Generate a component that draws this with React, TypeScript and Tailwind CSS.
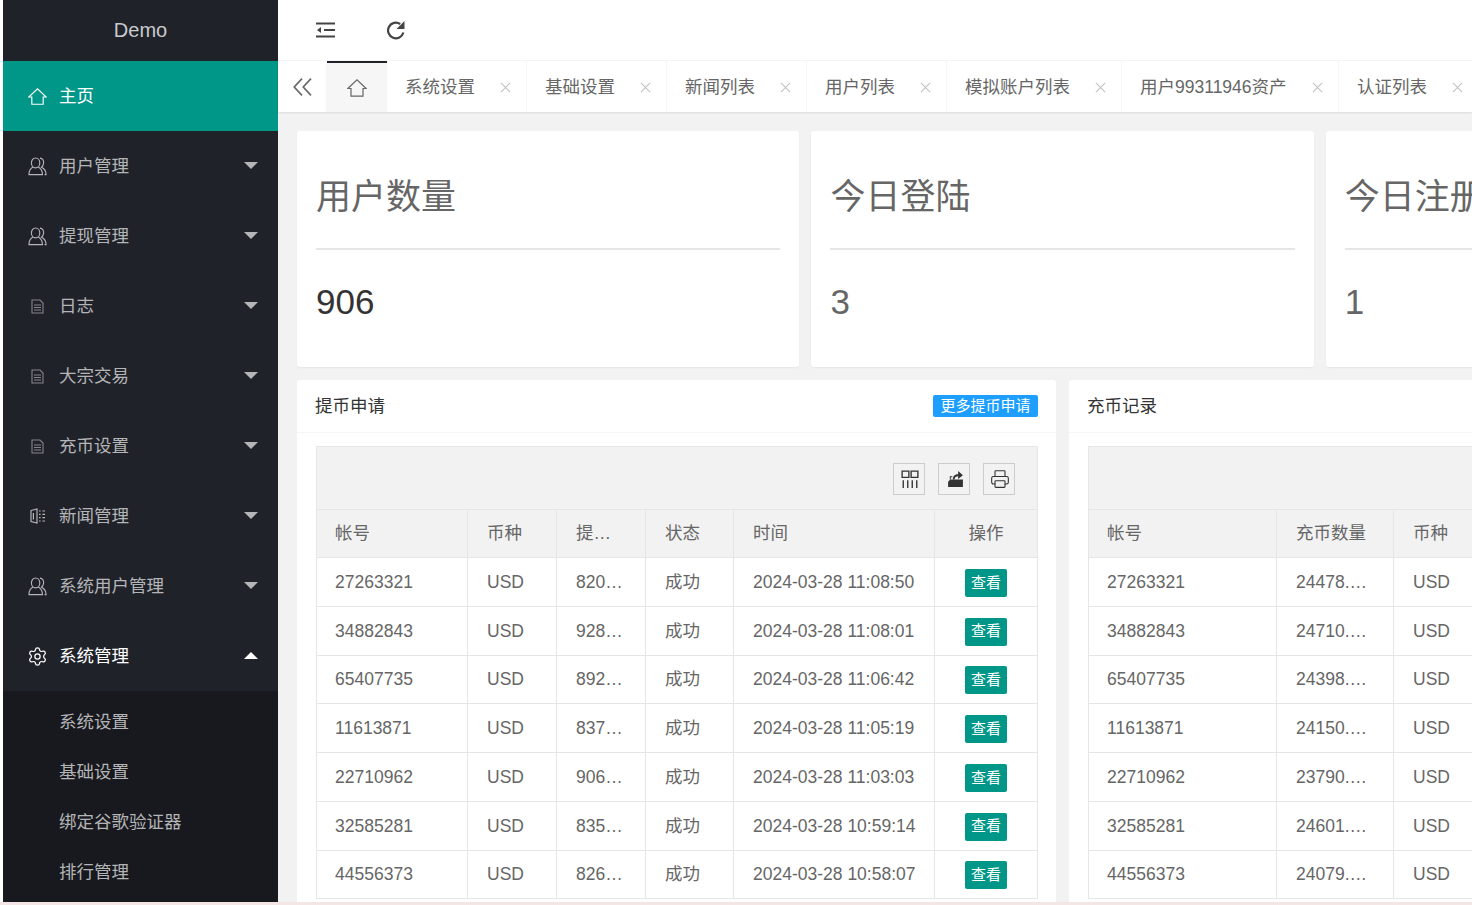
import { Settings, Printer } from 'lucide-react';

const menuItems = [
  { label: '用户管理', icon: 'user' },
  { label: '提现管理', icon: 'user' },
  { label: '日志', icon: 'file' },
  { label: '大宗交易', icon: 'file' },
  { label: '充币设置', icon: 'file' },
  { label: '新闻管理', icon: 'news' },
  { label: '系统用户管理', icon: 'user' },
];

const subItems = ['系统设置', '基础设置', '绑定谷歌验证器', '排行管理'];

const tabs = [
  { label: '系统设置', width: 'w-[140px]' },
  { label: '基础设置', width: 'w-[140px]' },
  { label: '新闻列表', width: 'w-[140px]' },
  { label: '用户列表', width: 'w-[140px]' },
  { label: '模拟账户列表', width: 'w-[175px]' },
  { label: '用户99311946资产', width: 'w-[217px]' },
  { label: '认证列表', width: 'w-[140px]' },
];

const stats = [
  { title: '用户数量', value: '906', color: 'text-[#333]' },
  { title: '今日登陆', value: '3', color: 'text-[#666]' },
  { title: '今日注册', value: '1', color: 'text-[#666]' },
];

const withdrawals = [
  ['27263321', '820…', '2024-03-28 11:08:50'],
  ['34882843', '928…', '2024-03-28 11:08:01'],
  ['65407735', '892…', '2024-03-28 11:06:42'],
  ['11613871', '837…', '2024-03-28 11:05:19'],
  ['22710962', '906…', '2024-03-28 11:03:03'],
  ['32585281', '835…', '2024-03-28 10:59:14'],
  ['44556373', '826…', '2024-03-28 10:58:07'],
];

const deposits = [
  ['27263321', '24478.…'],
  ['34882843', '24710.…'],
  ['65407735', '24398.…'],
  ['11613871', '24150.…'],
  ['22710962', '23790.…'],
  ['32585281', '24601.…'],
  ['44556373', '24079.…'],
];

function HomeIcon({ className }: { className: string }) {
  return (
    <svg viewBox="0 0 20 18" className={className} fill="none" stroke="currentColor" strokeWidth="1.2">
      <path d="M0.8 9.5 L10 0.9 L19.2 9.5 H16 V17.2 H4 V9.5 Z" />
    </svg>
  );
}

function UserIcon() {
  return (
    <svg viewBox="0 0 20 20" className="h-[19px] w-[19px]" fill="none" stroke="currentColor" strokeWidth="1.2">
      <ellipse cx="8" cy="6.2" rx="4.4" ry="5.2" />
      <path d="M5.2 10.6 C2.8 12 1 14.4 1 18.6 H15.2 C15.2 14.4 13.4 12 10.8 10.6" />
      <path d="M12.6 1.2 C15.4 1.4 16.8 3.6 16.4 6.6 C16.2 8.6 15.4 9.8 14.2 10.8 C16.8 12 19 14.4 19 18.6 H17.4" />
    </svg>
  );
}

function FileIcon() {
  return (
    <svg viewBox="0 0 13 15" className="h-[15px] w-[13px] text-[#85868a]" fill="none" stroke="currentColor" strokeWidth="1.1">
      <path d="M1 1 H9 L12 4 V14 H1 Z" />
      <path d="M3 6h7M3 8.5h7M3 11h7" />
    </svg>
  );
}

function NewsIcon() {
  return (
    <svg viewBox="0 0 16 16" className="h-[16px] w-[16px]" fill="none" stroke="currentColor" strokeWidth="1.2">
      <path d="M1 2.5 L7 1 V15 L1 13.5 Z" />
      <path d="M3.4 5v6.5" />
      <path d="M9 3h1.6M12.4 3H15M9 6.3h1.6M12.4 6.3H15M9 9.6h1.6M12.4 9.6H15M9 13h1.6M12.4 13H15" />
    </svg>
  );
}

function MenuIcon({ type }: { type: string }) {
  if (type === 'user') return <UserIcon />;
  if (type === 'file') return <FileIcon />;
  return <NewsIcon />;
}

function Sidebar() {
  return (
    <aside className="ml-[3px] flex w-[275px] shrink-0 flex-col bg-[#20222a]">
      <div className="flex h-[61px] items-center justify-center pb-[2px] text-[20px] text-[#c9cacc]">Demo</div>
      <div className="flex h-[70px] items-center bg-[#009688] pl-[25px] text-white">
        <span className="flex w-[19px] justify-center">
          <HomeIcon className="h-[17px] w-[19px]" />
        </span>
        <span className="ml-[12px]">主页</span>
      </div>
      {menuItems.map((item) => (
        <div key={item.label} className="flex h-[70px] items-center pl-[25px] text-[#b4b5b7]">
          <span className="flex w-[19px] justify-center">
            <MenuIcon type={item.icon} />
          </span>
          <span className="ml-[12px] flex-1">{item.label}</span>
          <span className="mb-[2px] mr-[20px] h-0 w-0 border-x-[7.5px] border-t-[7.5px] border-x-transparent border-t-[#b4b5b7]" />
        </div>
      ))}
      <div className="flex h-[70px] items-center pl-[25px] text-white">
        <span className="flex w-[19px] justify-center">
          <Settings className="h-[21px] w-[21px] shrink-0" strokeWidth={1.4} />
        </span>
        <span className="ml-[12px] flex-1">系统管理</span>
        <span className="mb-[2px] mr-[20px] h-0 w-0 border-x-[7.5px] border-b-[7.5px] border-x-transparent border-b-white" />
      </div>
      <div className="flex-1 bg-[#18191e] pt-[6px]">
        {subItems.map((label) => (
          <div key={label} className="flex h-[50px] items-center pl-[56px] text-[#b4b5b7]">
            {label}
          </div>
        ))}
      </div>
    </aside>
  );
}

function TopBar() {
  return (
    <div className="flex h-[61px] shrink-0 items-center border-b border-[#f6f6f6] bg-white pl-[38px] text-[#444]">
      <svg viewBox="0 0 20 16" className="h-[16px] w-[20px]" fill="none" stroke="currentColor" strokeWidth="2">
        <path d="M0 1.5h19M8 8h11M0 14.5h19" />
        <path d="M1 8l4-3v6z" fill="currentColor" stroke="none" />
      </svg>
      <svg viewBox="0 0 20 20" className="ml-[50px] h-[20px] w-[20px]" fill="none" stroke="currentColor" strokeWidth="2.2">
        <path d="M17.4 12.5 A7.8 7.8 0 1 1 14.2 4" />
        <path d="M18.5 1 V9 H10.5 Z" fill="currentColor" stroke="none" />
      </svg>
    </div>
  );
}

function TabBar() {
  return (
    <div className="flex h-[51px] shrink-0 bg-white text-[#666] shadow-[0_1px_2px_rgba(0,0,0,0.1)]">
      <div className="flex w-[49px] shrink-0 items-center justify-center border-r border-[#f6f6f6] pt-[1px]">
        <svg viewBox="0 0 19 18" className="h-[18px] w-[19px]" fill="none" stroke="currentColor" strokeWidth="1.6">
          <path d="M9 0.6 L1.2 9 L9 17.4M18 0.6 L10.2 9 L18 17.4" />
        </svg>
      </div>
      <div className="flex w-[60px] shrink-0 items-center justify-center border-t-2 border-[#20222a] bg-[#f6f6f6]">
        <HomeIcon className="h-[18px] w-[20px]" />
      </div>
      {tabs.map((tab) => (
        <div key={tab.label} className={`flex shrink-0 items-center justify-between border-r border-[#f6f6f6] pl-[18px] pr-[15px] pt-[2px] ${tab.width}`}>
          <span className="whitespace-nowrap">{tab.label}</span>
          <svg viewBox="0 0 12 12" className="h-[11px] w-[11px] shrink-0 text-[#c2c2c2]" fill="none" stroke="currentColor" strokeWidth="1.2">
            <path d="M1 1L11 11M11 1L1 11" />
          </svg>
        </div>
      ))}
    </div>
  );
}

function StatCard({ title, value, color }: { title: string; value: string; color: string }) {
  return (
    <div className="h-[236px] w-[502.4px] shrink-0 rounded-[3px] bg-white px-[19px] shadow-[0_1px_2px_rgba(0,0,0,0.05)]">
      <div className="flex h-[119px] items-center overflow-hidden whitespace-nowrap border-b-2 border-[#e6e6e6] pt-[15px] text-[35px] text-[#666]">
        {title}
      </div>
      <div className={`flex h-[104px] items-center text-[35px] ${color}`}>{value}</div>
    </div>
  );
}

const firstHead = 'flex h-[47px] items-center border-r border-[#e6e6e6] pl-[18px]';
const headCell = 'flex h-[47px] items-center border-r border-[#e6e6e6] px-[19px]';
const firstCell = 'flex h-full items-center border-r border-[#e6e6e6] pl-[18px] whitespace-nowrap';
const bodyCell = 'flex h-full items-center border-r border-[#e6e6e6] px-[19px] whitespace-nowrap';
const toolButton = 'flex h-[32px] w-[32px] items-center justify-center border border-[#ccc] text-[#333]';

function WithdrawTable() {
  return (
    <div className="grid w-[722px] grid-cols-[151px_89px_89px_88px_201px_102px] border border-b-0 border-[#e6e6e6] text-[#666]">
      <div className="col-span-6 flex h-[63px] items-center justify-end gap-[13px] border-b border-[#e6e6e6] bg-[#f2f2f2] pr-[22px] pt-[1px]">
        <button className={toolButton}>
          <svg viewBox="0 0 16 16" className="ml-[2px] h-[18px] w-[18px]" fill="none" stroke="currentColor" strokeWidth="1.2">
            <path d="M1 1h6v5.5H1zM9 1h6v5.5H9zM2 9v7M6 9v7M10 9v7M14 9v7" />
          </svg>
        </button>
        <button className={toolButton}>
          <svg viewBox="0 0 16 17" className="ml-[2px] h-[18px] w-[17px]" fill="currentColor">
            <path d="M1 11 L3 9 H15 V16 H1 Z" />
            <path d="M5.5 9 C5.5 5.5 7.5 4 10.5 4 V1 L15 5 L10.5 8.5 V6 C8.5 6 7.5 7 7 9 Z" />
            <path d="M2.6 9 V6 H5 V6.9 H3.5 V9 Z" />
          </svg>
        </button>
        <button className={toolButton}>
          <Printer className="ml-[1px] h-[20px] w-[20px]" strokeWidth={1.3} />
        </button>
      </div>
      <div className="col-span-6 grid grid-cols-subgrid border-b border-[#e6e6e6] bg-[#f2f2f2]">
        <div className={firstHead}>帐号</div>
        <div className={headCell}>币种</div>
        <div className={headCell}>提…</div>
        <div className={headCell}>状态</div>
        <div className={headCell}>时间</div>
        <div className="flex h-[47px] items-center justify-center">操作</div>
      </div>
      {withdrawals.map(([account, amount, time]) => (
        <div key={account} className="col-span-6 grid h-[48.75px] grid-cols-subgrid border-b border-[#e6e6e6]">
          <div className={firstCell}>{account}</div>
          <div className={bodyCell}>USD</div>
          <div className={bodyCell}>{amount}</div>
          <div className={bodyCell}>成功</div>
          <div className={bodyCell}>{time}</div>
          <div className="flex items-center justify-center pt-[2px]">
            <span className="flex h-[28px] w-[42px] items-center justify-center rounded-[2px] bg-[#009688] text-[15px] text-white">查看</span>
          </div>
        </div>
      ))}
    </div>
  );
}

function DepositTable() {
  return (
    <div className="grid w-[440px] grid-cols-[188px_117px_135px] border border-b-0 border-r-0 border-[#e6e6e6] text-[#666]">
      <div className="col-span-3 h-[63px] border-b border-[#e6e6e6] bg-[#f2f2f2]" />
      <div className="col-span-3 grid grid-cols-subgrid border-b border-[#e6e6e6] bg-[#f2f2f2]">
        <div className={firstHead}>帐号</div>
        <div className={headCell}>充币数量</div>
        <div className="flex h-[47px] items-center px-[19px]">币种</div>
      </div>
      {deposits.map(([account, amount]) => (
        <div key={account} className="col-span-3 grid h-[48.75px] grid-cols-subgrid border-b border-[#e6e6e6]">
          <div className={firstCell}>{account}</div>
          <div className={bodyCell}>{amount}</div>
          <div className="flex items-center px-[19px]">USD</div>
        </div>
      ))}
    </div>
  );
}

function Panel({ title, width, action, children }: { title: string; width: string; action?: string; children: React.ReactNode }) {
  return (
    <div className={`h-[600px] shrink-0 rounded-[3px] bg-white ${width}`}>
      <div className="flex h-[53px] items-center justify-between border-b border-[#f6f6f6] px-[18px] text-[#333]">
        <span>{title}</span>
        {action && (
          <span className="flex h-[22px] items-center rounded-[2px] bg-[#1e9fff] px-[7.5px] text-[15px] text-white">{action}</span>
        )}
      </div>
      <div className="pl-[19px] pt-[13px]">{children}</div>
    </div>
  );
}

export default function App() {
  return (
    <div className="flex h-[905px] w-[1472px] flex-col overflow-hidden bg-white font-['Liberation_Sans','Noto_Sans_CJK_SC',sans-serif] text-[17.5px]">
      <div className="flex min-h-0 flex-1">
        <Sidebar />
        <main className="flex min-w-0 flex-1 flex-col bg-[#f2f2f2]">
          <TopBar />
          <TabBar />
          <div className="min-h-0 flex-1 overflow-hidden pl-[19px] pt-[19px]">
            <div className="flex gap-[12px]">
              {stats.map((stat) => (
                <StatCard key={stat.title} {...stat} />
              ))}
            </div>
            <div className="mt-[13px] flex gap-[13px]">
              <Panel title="提币申请" width="w-[759px]" action="更多提币申请">
                <WithdrawTable />
              </Panel>
              <Panel title="充币记录" width="w-[500px]">
                <DepositTable />
              </Panel>
            </div>
          </div>
        </main>
      </div>
      <div className="h-[3px] shrink-0 bg-[#f5e6e6]" />
    </div>
  );
}
